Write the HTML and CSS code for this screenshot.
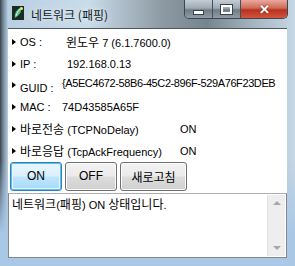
FILE: index.html
```html
<!DOCTYPE html>
<html>
 <head>
  <meta charset="utf-8">
  <title>네트워크 (패핑)</title>
  <link rel="stylesheet" href="styles.css">
 </head>
 <body>
  <div class="window">
   <div class="titlebar">
    <svg class="appicon" width="12" height="14" viewBox="0 0 12 14">
     <rect x="0" y="0" width="12" height="14" fill="#1d2a22"/>
     <path d="M3 12 C2 8 4 4 9 1 C10 5 8 9 3 12 Z" fill="#4fc08a"/>
     <path d="M4 10 C5 7 6 5 8 3" stroke="#d8f5e0" stroke-width="1" fill="none"/>
     <circle cx="9.5" cy="2.5" r="1.5" fill="#f2e36a"/>
    </svg>
    <span class="title">네트워크 (패핑)</span>
    <div class="caption">
     <div class="capbtn minbtn"><span class="minglyph"></span></div>
     <div class="capbtn maxbtn"><span class="maxglyph"></span></div>
     <div class="capbtn closebtn">✕</div>
    </div>
   </div>
   <div class="client">
    <div class="info">
     <div class="row first"><span class="bullet"></span><span class="label">OS :</span><span class="value os"><span class="ko">윈도우</span> 7 (6.1.7600.0)</span></div>
     <div class="row"><span class="bullet"></span><span class="label">IP :</span><span class="value ip">192.168.0.13</span></div>
     <div class="row guid"><span class="bullet"></span><span class="label">GUID :</span><span class="value">{A5EC4672-58B6-45C2-896F-529A76F23DEB</span></div>
     <div class="row"><span class="bullet"></span><span class="label">MAC :</span><span class="value mac">74D43585A65F</span></div>
     <div class="row opt"><span class="bullet"></span><span class="label wide"><span class="ko">바로전송</span> (TCPNoDelay)</span><span class="state">ON</span></div>
     <div class="row opt"><span class="bullet"></span><span class="label wide"><span class="ko">바로응답</span> (TcpAckFrequency)</span><span class="state">ON</span></div>
     <div class="buttons">
      <button class="btn focus">ON</button>
      <button class="btn">OFF</button>
      <button class="btn refresh"><span class="ko">새로고침</span></button>
     </div>
    </div>
    <div class="log">
     <div class="logtext"><span class="ko">네트워크</span>(<span class="ko">패핑</span>) ON <span class="ko">상태입니다</span>.</div>
     <div class="scroll">
      <span class="up"></span>
      <span class="down"></span>
     </div>
    </div>
   </div>
  </div>
 </body>
</html>
```
FILE: styles.css
```css
html, body {
    margin: 0;
    padding: 0;
}
body {
    width: 295px;
    height: 266px;
    overflow: hidden;
    font-family: "Liberation Sans", "Noto Sans CJK KR", sans-serif;
    font-size: 11px;
    color: #000;
}
.ko {
    font-family: "Noto Sans CJK KR", sans-serif;
    font-size: 12px;
}
.window {
    width: 295px;
    height: 266px;
    box-sizing: border-box;
    display: flex;
    flex-direction: column;
    background:
        linear-gradient(180deg, rgba(255,255,255,0) 60%, #a9c8e6 88%),
        linear-gradient(90deg, #3b434a 0, #6f8496 3px, #b9cfe2 8px, #c9dcea 30%, #8d9aa3 55%, #76848d 70%, #a3b3be 85%, #c6d7e5 100%);
}
.titlebar {
    height: 28px;
    display: flex;
    align-items: flex-start;
    position: relative;
}
.appicon {
    margin: 6px 0 0 12px;
}
.title {
    margin: 7px 0 0 7px;
    font-family: "Noto Sans CJK KR", sans-serif;
    font-size: 12px;
    line-height: 15px;
    color: #101820;
    text-shadow: 0 0 6px rgba(255,255,255,0.9);
}
.caption {
    position: absolute;
    top: 0;
    right: 7px;
    display: flex;
    height: 18px;
    border: 1px solid #3d4650;
    border-top: none;
    border-radius: 0 0 5px 5px;
    overflow: hidden;
}
.capbtn {
    height: 18px;
    display: flex;
    align-items: center;
    justify-content: center;
}
.minbtn, .maxbtn {
    width: 27px;
    background: linear-gradient(180deg, #c4ccd4 0, #9eaab4 45%, #707d88 55%, #8f9ba5 100%);
    border-right: 1px solid #454f59;
}
.closebtn {
    width: 46px;
    background: linear-gradient(180deg, #e9a99c 0, #cf6a57 45%, #b8321e 55%, #d2553c 100%);
    color: #fff;
    font-size: 13px;
    font-weight: bold;
    text-shadow: 0 0 2px #5a1a10;
}
.minglyph {
    width: 9px;
    height: 3px;
    margin-top: 6px;
    background: #fff;
    border: 1px solid #3a434c;
}
.maxglyph {
    width: 7px;
    height: 5px;
    border: 2px solid #fff;
    outline: 1px solid #3a434c;
}
.client {
    flex: 1;
    margin: 0 8px 8px 8px;
    display: flex;
    flex-direction: column;
    background: #fff;
    border-top: 1px solid #4d5a66;
}
.info {
    height: 164px;
    box-sizing: border-box;
    padding: 1px 0 0 2px;
}
.row {
    height: 21.5px;
    display: flex;
    align-items: center;
    white-space: nowrap;
}
.row.first {
    height: 23px;
}
.row.opt {
    height: 22px;
}
.bullet {
    width: 0;
    height: 0;
    margin: 0 4px 0 2px;
    border-top: 3px solid transparent;
    border-bottom: 3px solid transparent;
    border-left: 4px solid #000;
}
.label {
    width: 42px;
}
.label.wide {
    width: 160px;
}
.value.os {
    margin-left: 4px;
}
.value.ip {
    margin-left: 5px;
}
.guid .label {
    margin-top: 6px;
}
.guid .value {
    margin-top: -5px;
    letter-spacing: -0.4px;
}
.buttons {
    display: flex;
    gap: 3px;
    margin: 0;
}
.btn {
    width: 52px;
    height: 29px;
    padding: 0;
    font-family: "Liberation Sans", "Noto Sans CJK KR", sans-serif;
    font-size: 12px;
    color: #000;
    border: 1px solid #707070;
    border-radius: 3px;
    background: linear-gradient(180deg, #f2f2f2 0, #ebebeb 48%, #dddddd 52%, #cfcfcf 100%);
    box-shadow: inset 0 0 0 1px #fbfbfb;
}
.btn.focus {
    border-color: #3c7fb1;
    background: linear-gradient(180deg, #eaf6fd 0, #d9f0fc 48%, #bee6fd 52%, #a7d9f5 100%);
    box-shadow: inset 0 0 0 1px #4fc2ef, inset 0 0 0 2px #e8f6fd;
}
.btn.refresh {
    width: 67px;
}
.log {
    flex: 1;
    display: flex;
    border: 1px solid #828790;
    border-top-color: #abadb3;
}
.logtext {
    flex: 1;
    padding: 1px 0 0 3px;
}
.scroll {
    width: 17px;
    margin: 1px 1px 1px 0;
    background: #eeeeee;
    border-left: 1px solid #e2e2e2;
    display: flex;
    flex-direction: column;
    justify-content: space-between;
    align-items: center;
    padding: 6px 0;
}
.up, .down {
    width: 0;
    height: 0;
    border-left: 4px solid transparent;
    border-right: 4px solid transparent;
}
.up {
    border-bottom: 4px solid #a8a8a8;
}
.down {
    border-top: 4px solid #a8a8a8;
}
```
